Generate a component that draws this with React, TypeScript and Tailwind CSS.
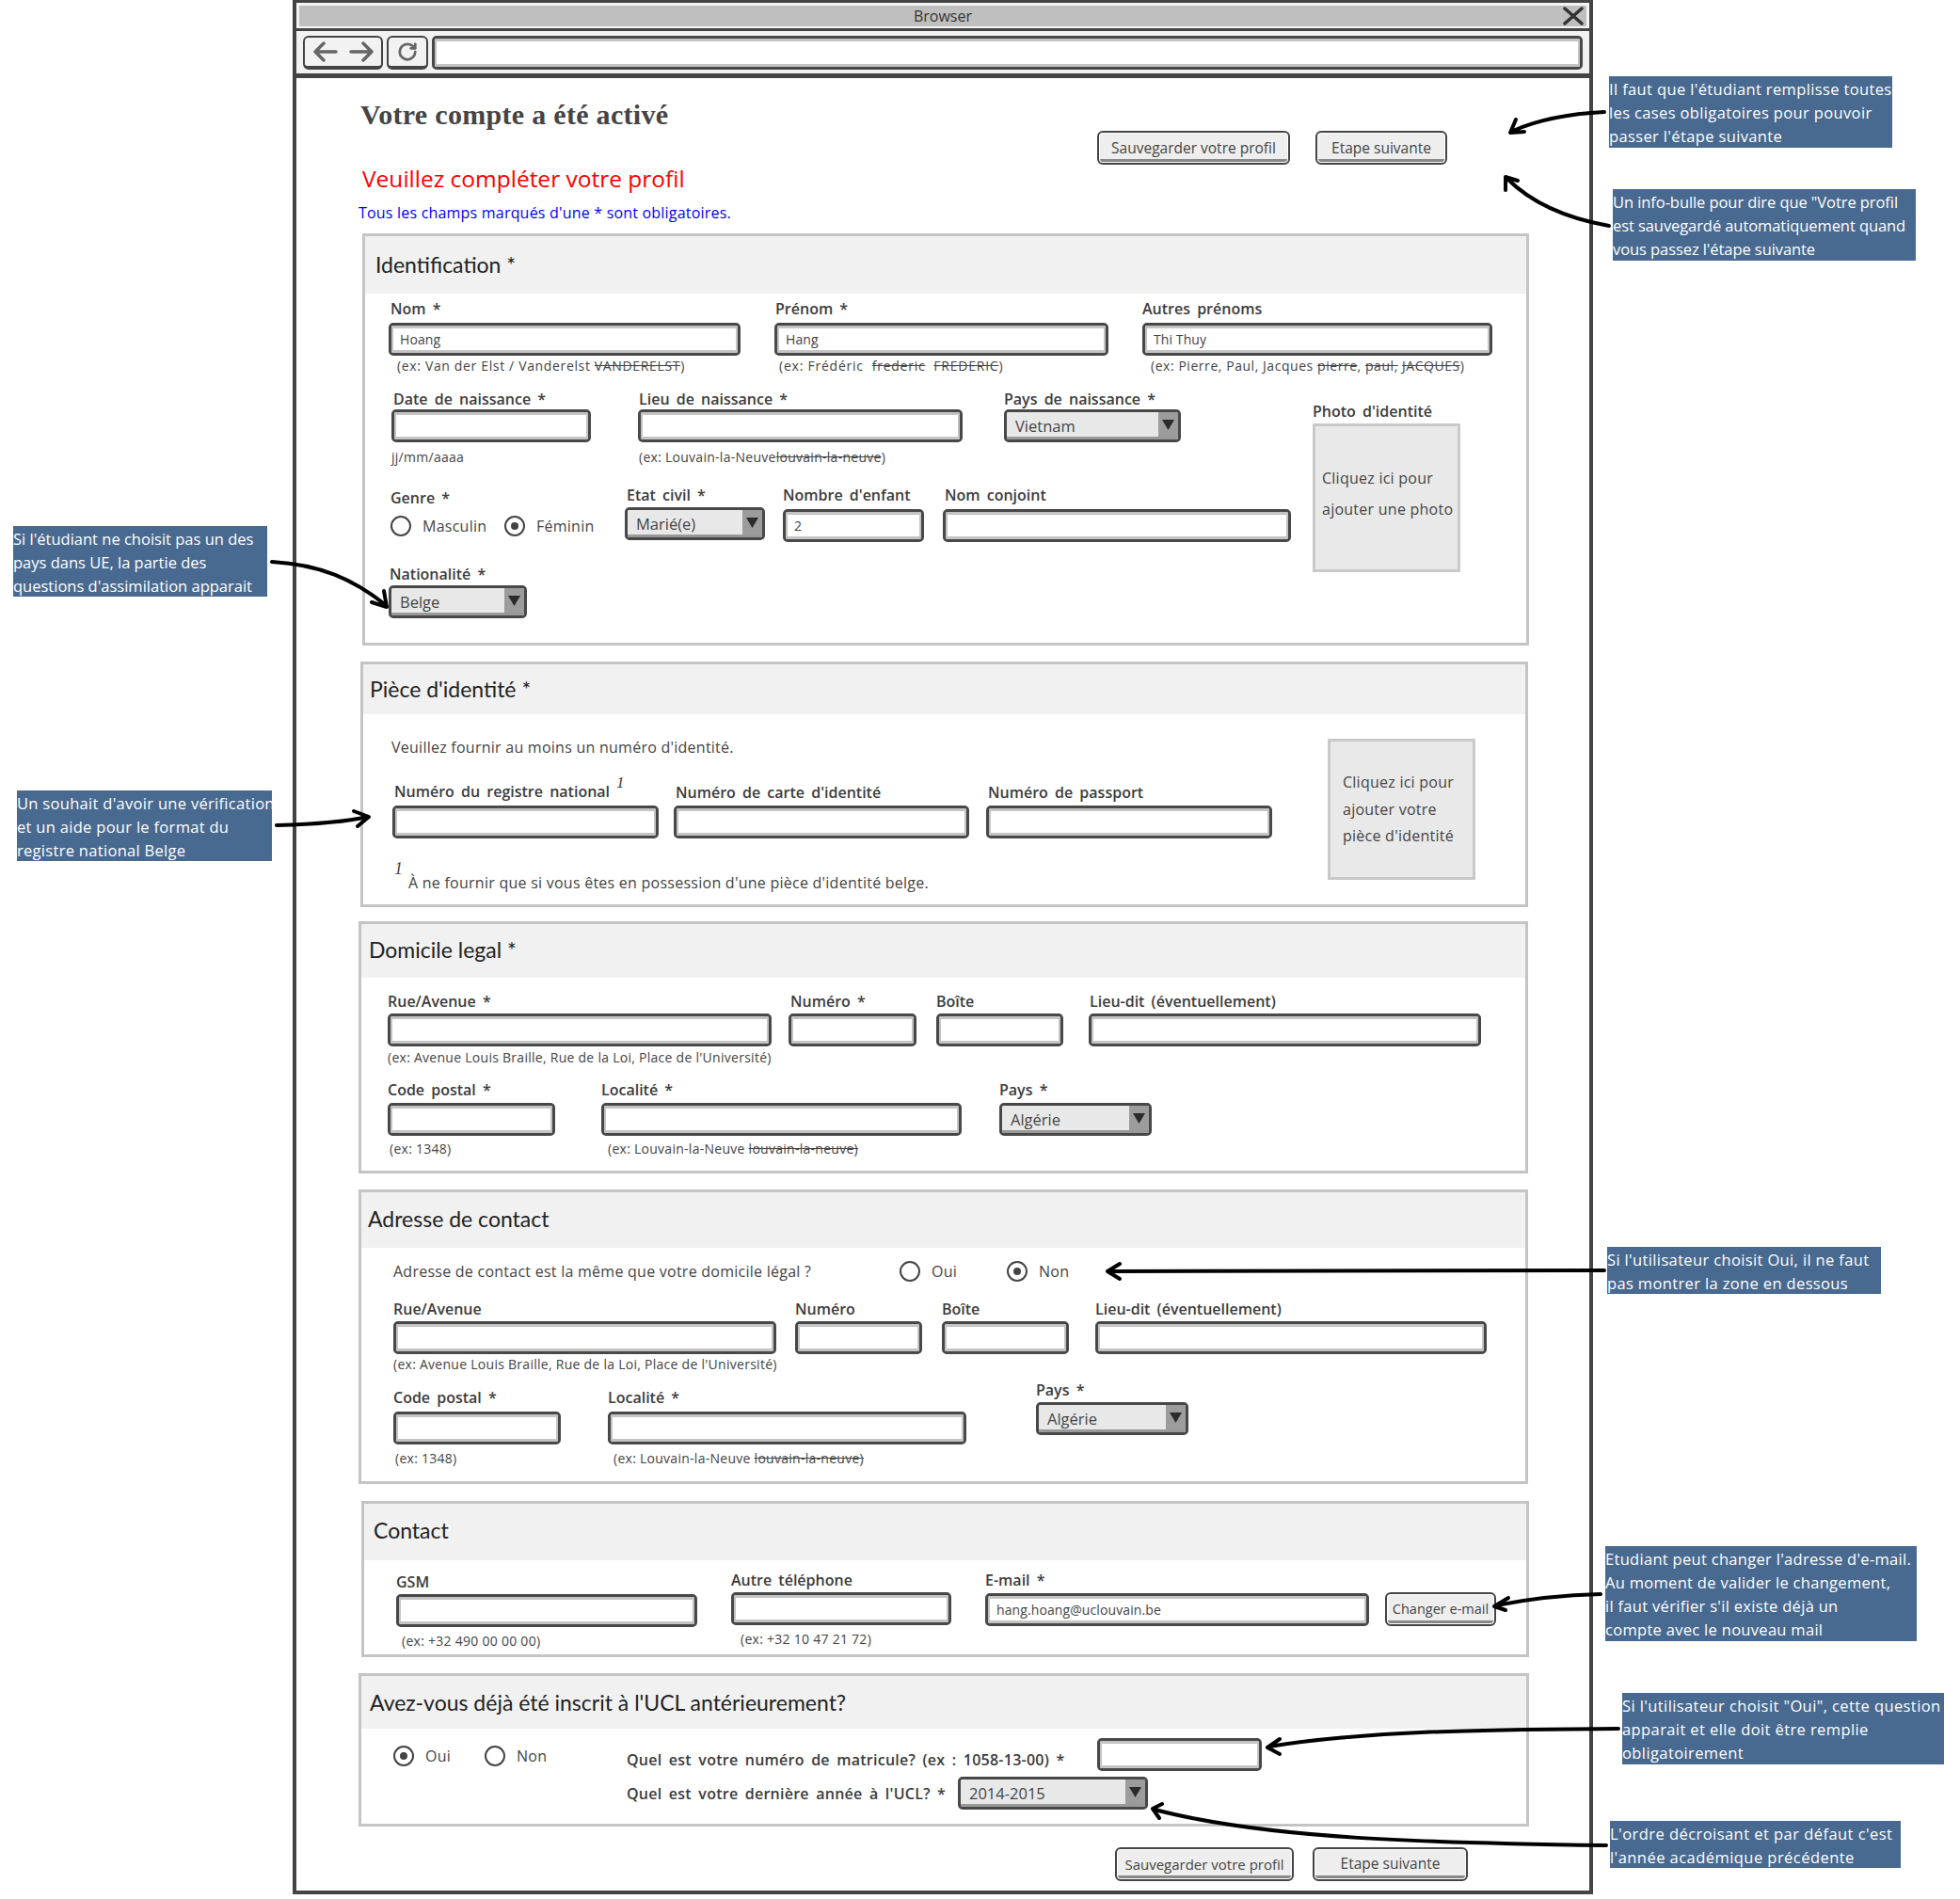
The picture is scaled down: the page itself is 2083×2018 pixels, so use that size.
import React from "react";
import { RotateCw } from "lucide-react";

const cx = (...a: (string | undefined)[]) => a.filter(Boolean).join(" ");

function Input({ value, className }: { value?: string; className?: string }) {
  return (
    <div className={cx("h-[35px] rounded-[5px] border-[3px] border-[#484848]", className)}>
      <div className="flex h-full items-center rounded-[2px] border-x-2 border-y-[3px] border-[#c4c4c4] bg-white pl-[7px] text-[14px] tracking-[0.1px] text-[#444]">
        {value}
      </div>
    </div>
  );
}

function Select({ value, className }: { value: string; className?: string }) {
  return (
    <div className={cx("h-[35px] rounded-[5px] border-[3px] border-[#484848] bg-white", className)}>
      <div className="flex h-full rounded-[2px] border-b-[3px] border-[#999] bg-[#e8e8e8] pl-[9px] text-[16.5px] text-[#444]">
        <span className="flex-1 self-center pt-[4px]">{value}</span>
        <span className="flex w-[21px] items-center justify-center bg-[#9c9c9c]">
          <svg width="13" height="13" viewBox="0 0 12 12"><path d="M0 1h12L6 11z" fill="#2b2b2b" /></svg>
        </span>
      </div>
    </div>
  );
}

function Btn({ children, className }: { children: React.ReactNode; className?: string }) {
  return (
    <div className={cx("h-[36px] rounded-[6px] border-[2px] border-[#444] bg-white p-[1px]", className)}>
      <div className="flex h-full items-center justify-center whitespace-nowrap rounded-[3px] border-b-[3px] border-[#888] bg-[#eeeeee] pt-[3px] text-[15.5px] text-[#444]">
        {children}
      </div>
    </div>
  );
}

function Radio({ on }: { on?: boolean }) {
  return (
    <span className="flex h-[22px] w-[22px] shrink-0 items-center justify-center rounded-full border-2 border-[#444] bg-white">
      {on && <span className="h-[8px] w-[8px] rounded-full bg-[#444]" />}
    </span>
  );
}

function Label({ children, className }: { children: React.ReactNode; className?: string }) {
  return (
    <div className={cx("flex h-[20px] items-center whitespace-nowrap text-[16px] font-semibold text-[#3c3c3c] [word-spacing:3px]", className)}>
      <span>{children}</span>
    </div>
  );
}

function Hint({ children, className }: { children: React.ReactNode; className?: string }) {
  return (
    <div className={cx("flex h-[20px] items-center text-[14px] tracking-[0.27px] whitespace-pre text-[#444]", className)}>
      <span>{children}</span>
    </div>
  );
}

const S = ({ children }: { children: React.ReactNode }) => <span className="line-through">{children}</span>;

function Section({ className, head, title, children }: { className: string; head: string; title: React.ReactNode; children: React.ReactNode }) {
  return (
    <section className={cx("shrink-0 border-[3px] border-[#c4c4c4] bg-white", className)}>
      <div className={cx("flex items-center bg-[#f1f1f1] font-['Lato',sans-serif] text-[23px] text-[#222]", head)}>{title}</div>
      {children}
    </section>
  );
}

function PhotoBox({ lines, className }: { lines: React.ReactNode; className: string }) {
  return <div className={cx("border-[3px] border-[#c9c9c9] bg-[#e9e9e9] text-[16px] tracking-[0.25px] text-[#444]", className)}>{lines}</div>;
}

function Note({ className, lines }: { className: string; lines: string[] }) {
  return (
    <div className={cx("absolute bg-[#496a90] pt-[1px] text-[16.5px] leading-[25px] whitespace-nowrap text-white", className)}>
      {lines.map((l) => (
        <div key={l}>{l}</div>
      ))}
    </div>
  );
}

function NavArrow({ flip }: { flip?: boolean }) {
  return (
    <svg width="26" height="22" viewBox="0 0 26 22" fill="none" stroke="#666" strokeWidth="3.5" strokeLinecap="round" strokeLinejoin="round" className={flip ? "-scale-x-100" : undefined}>
      <path d="M2 11H24M11 2L2 11L11 20" />
    </svg>
  );
}

export default function App() {
  return (
    <div className="relative h-[2018px] w-[2083px] overflow-hidden bg-white font-['Open_Sans',sans-serif]">
      <div className="ml-[311px] flex h-[2013px] w-[1382px] flex-col border-x-4 border-t-[3px] border-b-4 border-[#444]">
        {/* title bar */}
        <div className="flex h-[27px] shrink-0 items-center bg-[#f4f4f4] px-[3px]">
          <div className="relative flex h-[22px] w-full items-center justify-center bg-[#bfbfbf] text-[16px] text-[#333]">
            Browser
            <svg className="absolute right-[3px] top-[1px]" width="22" height="20" viewBox="0 0 22 20" fill="none" stroke="#333" strokeWidth="3.5" strokeLinecap="round">
              <path d="M2 2L20 18M20 2L2 18" />
            </svg>
          </div>
        </div>
        <div className="h-[3px] shrink-0 bg-[#444]" />
        {/* toolbar */}
        <div className="flex h-[45px] shrink-0 items-center bg-[#f2f2f2] pl-[7px]">
          <div className="flex h-[36px] w-[85px] items-center justify-center gap-[12px] rounded-[6px] border-2 border-b-[4px] border-[#444] text-[#666]">
            <NavArrow />
            <NavArrow flip />
          </div>
          <div className="ml-[4px] flex h-[36px] w-[44px] items-center justify-center rounded-[6px] border-2 border-b-[4px] border-[#444] text-[#666]">
            <RotateCw size={22} strokeWidth={3} />
          </div>
          <div className="ml-[4px] h-[36px] w-[1223px]">
            <Input className="h-[36px]" />
          </div>
        </div>
        <div className="h-[5px] shrink-0 bg-[#444]" />

        {/* heading */}
        <div className="flex h-[165px] shrink-0">
          <div className="w-[851px] pl-[68px]">
            <h1 className="mt-[19px] h-[40px] font-['Liberation_Serif',serif] text-[30px] leading-[40px] font-bold tracking-[0.3px] text-[#444]">Votre compte a été activé</h1>
            <div className="mt-[28px] ml-[2px] h-[40px] text-[24.5px] leading-[40px] text-[#ff0000]">Veuillez compléter votre profil</div>
            <div className="mt-[4px] -ml-[2px] h-[24px] text-[16px] leading-[24px] tracking-[0.2px] text-[#0000ff]">Tous les champs marqués d'une * sont obligatoires.</div>
          </div>
          <Btn className="mt-[56px] w-[205px]"><span className="pt-[2px]">Sauvegarder votre profil</span></Btn>
          <Btn className="mt-[56px] ml-[27px] w-[140px]"><span className="pt-[2px]">Etape suivante</span></Btn>
        </div>

        {/* Identification */}
        <Section className="ml-[70px] h-[438px] w-[1240px]" head="h-[61px] pl-[11px]" title="Identification *">
          <div className="mt-[6px] flex">
            <div className="ml-[25px] w-[374px]">
              <Label className="mb-[5px] ml-[2px]">Nom *</Label>
              <Input value="Hoang" />
              <Hint className="ml-[9px]"><span className="tracking-[0.65px]">(ex: Van der Elst / Vanderelst <S>VANDERELST</S>)</span></Hint>
            </div>
            <div className="ml-[36px] w-[355px]">
              <Label className="mb-[5px] ml-[1px]">Prénom *</Label>
              <Input value="Hang" />
              <Hint className="ml-[5px]"><span className="tracking-[0.77px]">(ex: Frédéric  <S>frederic</S>  <S>FREDERIC</S>)</span></Hint>
            </div>
            <div className="ml-[36px] w-[372px]">
              <Label className="mb-[5px]">Autres prénoms</Label>
              <Input value="Thi Thuy" />
              <Hint className="ml-[9px]"><span className="tracking-[0.55px]">(ex: Pierre, Paul, Jacques <S>pierre</S>, <S>paul,</S> <S>JACQUES</S>)</span></Hint>
            </div>
          </div>
          <div className="flex">
            <div className="w-[1007px]">
              <div className="mt-[16px] flex">
                <div className="ml-[28px] w-[212px]">
                  <Label className="mb-[1px] ml-[2px]">Date de naissance *</Label>
                  <Input />
                  <Hint className="mt-[5px]">jj/mm/aaaa</Hint>
                </div>
                <div className="ml-[50px] w-[345px]">
                  <Label className="mb-[1px] ml-[1px]">Lieu de naissance *</Label>
                  <Input />
                  <Hint className="mt-[5px] ml-[1px]">(ex: Louvain-la-Neuve<S>louvain-la-neuve</S>)</Hint>
                </div>
                <div className="ml-[44px] w-[188px]">
                  <Label className="mb-[1px]">Pays de naissance *</Label>
                  <Select value="Vietnam" />
                </div>
              </div>
              <div className="mt-[21px] flex">
                <div className="mt-[3px] ml-[27px] w-[249px]">
                  <Label>Genre *</Label>
                  <div className="mt-[9px] flex h-[22px] items-center text-[16px] tracking-[0.25px] text-[#444]">
                    <Radio />
                    <span className="ml-[12px] w-[87px]">Masculin</span>
                    <Radio on />
                    <span className="ml-[12px]">Féminin</span>
                  </div>
                </div>
                <div className="w-[149px]">
                  <Label className="mb-[3px] ml-[2px]">Etat civil *</Label>
                  <Select value="Marié(e)" />
                </div>
                <div className="ml-[19px] w-[150px]">
                  <Label className="mb-[5px]">Nombre d'enfant</Label>
                  <Input value="2" />
                </div>
                <div className="ml-[20px] w-[370px]">
                  <Label className="mb-[5px] ml-[2px]">Nom conjoint</Label>
                  <Input />
                </div>
              </div>
              <div className="mt-[24px] ml-[25px] w-[147px]">
                <Label className="mb-[2px] ml-[1px]">Nationalité *</Label>
                <Select value="Belge" />
              </div>
            </div>
            <div className="mt-[29px] w-[157px]">
              <Label className="mb-[3px]">Photo d'identité</Label>
              <PhotoBox
                className="h-[158px] pt-[39px] pl-[7px] leading-[33px]"
                lines={
                  <>
                    <div>Cliquez ici pour</div>
                    <div className="whitespace-nowrap">ajouter une photo</div>
                  </>
                }
              />
            </div>
          </div>
        </Section>

        {/* Pièce */}
        <Section className="mt-[17px] ml-[68px] h-[261px] w-[1241px]" head="h-[53px] pl-[7px]" title="Pièce d'identité *">
          <div className="flex">
            <div className="w-[1025px]">
              <div className="mt-[25px] ml-[30px] flex h-[20px] items-center text-[16px] tracking-[0.25px] text-[#444]">Veuillez fournir au moins un numéro d'identité.</div>
              <div className="mt-[28px] flex">
                <div className="ml-[31px] w-[283px]">
                  <Label className="mb-[4px] ml-[2px]">
                    Numéro du registre national
                    <span className="relative -top-[10px] ml-[7px] font-['Liberation_Serif',serif] text-[17px] font-normal italic">1</span>
                  </Label>
                  <Input />
                </div>
                <div className="ml-[16px] w-[314px]">
                  <Label className="mb-[4px] ml-[2px]">Numéro de carte d'identité</Label>
                  <Input />
                </div>
                <div className="ml-[18px] w-[304px]">
                  <Label className="mb-[4px] ml-[2px]">Numéro de passport</Label>
                  <Input />
                </div>
              </div>
              <div className="mt-[37px] ml-[33px] flex h-[20px] items-center text-[16px] tracking-[0.25px] whitespace-nowrap text-[#444]">
                <span className="relative -top-[15px] w-[15px] font-['Liberation_Serif',serif] text-[18px] italic">1</span>
                À ne fournir que si vous êtes en possession d'une pièce d'identité belge.
              </div>
            </div>
            <PhotoBox
              className="mt-[26px] h-[150px] w-[157px] pt-[29px] pl-[13px] leading-[28.5px]"
              lines={
                <>
                  <div>Cliquez ici pour</div>
                  <div>ajouter votre</div>
                  <div>pièce d'identité</div>
                </>
              }
            />
          </div>
        </Section>

        {/* Domicile */}
        <Section className="mt-[15px] ml-[66px] h-[268px] w-[1243px]" head="h-[57px] pb-[2px] pl-[8px]" title="Domicile legal *">
          <div className="mt-[15px] flex">
            <div className="ml-[28px] w-[408px]">
              <Label className="mb-[3px]">Rue/Avenue *</Label>
              <Input />
              <Hint className="mt-[1px]">(ex: Avenue Louis Braille, Rue de la Loi, Place de l'Université)</Hint>
            </div>
            <div className="ml-[18px] w-[136px]">
              <Label className="mb-[3px] ml-[2px]">Numéro *</Label>
              <Input />
            </div>
            <div className="ml-[21px] w-[135px]">
              <Label className="mb-[3px]">Boîte</Label>
              <Input />
            </div>
            <div className="ml-[27px] w-[417px]">
              <Label className="mb-[3px] ml-[1px]">Lieu-dit (éventuellement)</Label>
              <Input />
            </div>
          </div>
          <div className="mt-[15px] flex">
            <div className="ml-[28px] w-[178px]">
              <Label className="mb-[4px]">Code postal *</Label>
              <Input />
              <Hint className="mt-[3px] ml-[2px]">(ex: 1348)</Hint>
            </div>
            <div className="ml-[49px] w-[383px]">
              <Label className="mb-[4px]">Localité *</Label>
              <Input />
              <Hint className="mt-[3px] ml-[7px]">(ex: Louvain-la-Neuve <S>louvain-la-neuve)</S></Hint>
            </div>
            <div className="ml-[40px] w-[162px]">
              <Label className="mb-[4px]">Pays *</Label>
              <Select value="Algérie" />
            </div>
          </div>
        </Section>

        {/* Adresse */}
        <Section className="mt-[17px] ml-[66px] h-[313px] w-[1243px]" head="h-[59px] pb-[2px] pl-[7px]" title="Adresse de contact">
          <div className="mt-[13px] ml-[34px] flex h-[24px] items-center text-[16px] tracking-[0.25px] text-[#444]">
            <span className="w-[538px]">Adresse de contact est la même que votre domicile légal ?</span>
            <Radio />
            <span className="ml-[12px] w-[80px]">Oui</span>
            <Radio on />
            <span className="ml-[12px]">Non</span>
          </div>
          <div className="mt-[18px] flex">
            <div className="ml-[34px] w-[407px]">
              <Label className="mb-[3px]">Rue/Avenue</Label>
              <Input />
              <Hint>(ex: Avenue Louis Braille, Rue de la Loi, Place de l'Université)</Hint>
            </div>
            <div className="ml-[20px] w-[135px]">
              <Label className="mb-[3px]">Numéro</Label>
              <Input />
            </div>
            <div className="ml-[21px] w-[135px]">
              <Label className="mb-[3px]">Boîte</Label>
              <Input />
            </div>
            <div className="ml-[28px] w-[416px]">
              <Label className="mb-[3px]">Lieu-dit (éventuellement)</Label>
              <Input />
            </div>
          </div>
          <div className="mt-[16px] flex">
            <div className="ml-[34px] w-[178px]">
              <Label className="mb-[5px]">Code postal *</Label>
              <Input />
              <Hint className="mt-[4px] ml-[2px]">(ex: 1348)</Hint>
            </div>
            <div className="ml-[50px] w-[381px]">
              <Label className="mb-[5px]">Localité *</Label>
              <Input />
              <Hint className="mt-[4px] ml-[6px]">(ex: Louvain-la-Neuve <S>louvain-la-neuve)</S></Hint>
            </div>
            <div className="-mt-[8px] ml-[74px] w-[162px]">
              <Label className="mb-[3px]">Pays *</Label>
              <Select value="Algérie" />
            </div>
          </div>
        </Section>

        {/* Contact */}
        <Section className="mt-[18px] ml-[69px] h-[166px] w-[1241px]" head="h-[60px] pb-[4px] pl-[10px]" title="Contact">
          <div className="mt-[13px] flex">
            <div className="ml-[34px] w-[320px]">
              <Label className="mb-[3px]">GSM</Label>
              <Input />
              <Hint className="mt-[4px] ml-[6px]">(ex: +32 490 00 00 00)</Hint>
            </div>
            <div className="-mt-[2px] ml-[36px] w-[234px]">
              <Label className="mb-[3px]">Autre téléphone</Label>
              <Input />
              <Hint className="mt-[4px] ml-[10px]">(ex: +32 10 47 21 72)</Hint>
            </div>
            <div className="-mt-[2px] ml-[36px] w-[408px]">
              <Label className="mb-[4px]">E-mail *</Label>
              <Input value="hang.hoang@uclouvain.be" />
            </div>
            <Btn className="mt-[21px] ml-[17px] w-[118px]">
              <span className="text-[14.5px]">Changer e-mail</span>
            </Btn>
          </div>
        </Section>

        {/* UCL */}
        <Section className="mt-[17px] ml-[66px] h-[163px] w-[1244px]" head="h-[56px] pl-[9px]" title="Avez-vous déjà été inscrit à l'UCL antérieurement?">
          <div className="flex">
            <div className="mt-[18px] ml-[34px] flex h-[22px] w-[248px] items-center text-[16px] tracking-[0.25px] text-[#444]">
              <Radio on />
              <span className="ml-[12px] w-[63px]">Oui</span>
              <Radio />
              <span className="ml-[12px]">Non</span>
            </div>
            <div className="mt-[10px]">
              <div className="flex">
                <Label className="mt-[13px] w-[500px] tracking-[0.25px]">Quel est votre numéro de matricule? (ex : 1058-13-00) *</Label>
                <Input className="w-[175px]" />
              </div>
              <div className="mt-[6px] flex">
                <Label className="mt-[8px] w-[352px] tracking-[0.25px]">Quel est votre dernière année à l'UCL? *</Label>
                <Select className="w-[202px]" value="2014-2015" />
              </div>
            </div>
          </div>
        </Section>

        <div className="mt-[22px] flex">
          <Btn className="ml-[870px] w-[190px]">
            <span className="text-[15px]">Sauvegarder votre profil</span>
          </Btn>
          <Btn className="ml-[20px] w-[165px]">Etape suivante</Btn>
        </div>
      </div>

      {/* annotations on the canvas */}
      <Note className="top-[81px] left-[1710px] h-[76px] w-[301px] tracking-[0.36px]" lines={["Il faut que l'étudiant remplisse toutes", "les cases obligatoires pour pouvoir", "passer l'étape suivante"]} />
      <Note className="top-[201px] left-[1714px] h-[76px] w-[322px] tracking-[-0.08px]" lines={['Un info-bulle pour dire que "Votre profil', "est sauvegardé automatiquement quand", "vous passez l'étape suivante"]} />
      <Note className="top-[559px] left-[14px] h-[75px] w-[270px] tracking-[0px]" lines={["Si l'étudiant ne choisit pas un des", "pays dans UE, la partie des", "questions d'assimilation apparait"]} />
      <Note className="top-[840px] left-[18px] h-[75px] w-[271px] tracking-[0.3px]" lines={["Un souhait d'avoir une vérification", "et un aide pour le format du", "registre national Belge"]} />
      <Note className="top-[1325px] left-[1708px] h-[50px] w-[291px] tracking-[0.36px]" lines={["Si l'utilisateur choisit Oui, il ne faut", "pas montrer la zone en dessous"]} />
      <Note className="top-[1643px] left-[1706px] h-[101px] w-[331px] tracking-[0.3px]" lines={["Etudiant peut changer l'adresse d'e-mail.", "Au moment de valider le changement,", "il faut vérifier s'il existe déjà un", "compte avec le nouveau mail"]} />
      <Note className="top-[1799px] left-[1724px] h-[76px] w-[342px] tracking-[0.4px]" lines={['Si l\'utilisateur choisit "Oui", cette question', "apparait et elle doit être remplie", "obligatoirement"]} />
      <Note className="top-[1935px] left-[1711px] h-[50px] w-[309px] tracking-[0.45px]" lines={["L'ordre décroisant et par défaut c'est", "l'année académique précédente"]} />

      <svg className="pointer-events-none absolute top-0 left-0" width="2083" height="2018" fill="none" stroke="#000" strokeWidth="4" strokeLinecap="round" strokeLinejoin="round">
        <path d="M1705 119C1665 121 1635 127 1608 139M1611 127L1605 141L1620 140" />
        <path d="M1710 240C1665 232 1627 215 1602 190M1600 202L1600 188L1613 192" />
        <path d="M289 597C340 600 375 615 410 643M395 640L411 645L408 628" />
        <path d="M294 877C330 876 365 874 390 868M376 862L392 868L380 878" />
        <path d="M1705 1350L1178 1351M1190 1343L1177 1351L1190 1359" />
        <path d="M1701 1694C1660 1695 1625 1699 1590 1706M1603 1698L1588 1707L1600 1711" />
        <path d="M1720 1837C1600 1838 1460 1838 1349 1856M1360 1848L1347 1857L1360 1864" />
        <path d="M1707 1961C1520 1958 1350 1955 1227 1923M1235 1917L1225 1922L1232 1932" />
      </svg>
    </div>
  );
}
